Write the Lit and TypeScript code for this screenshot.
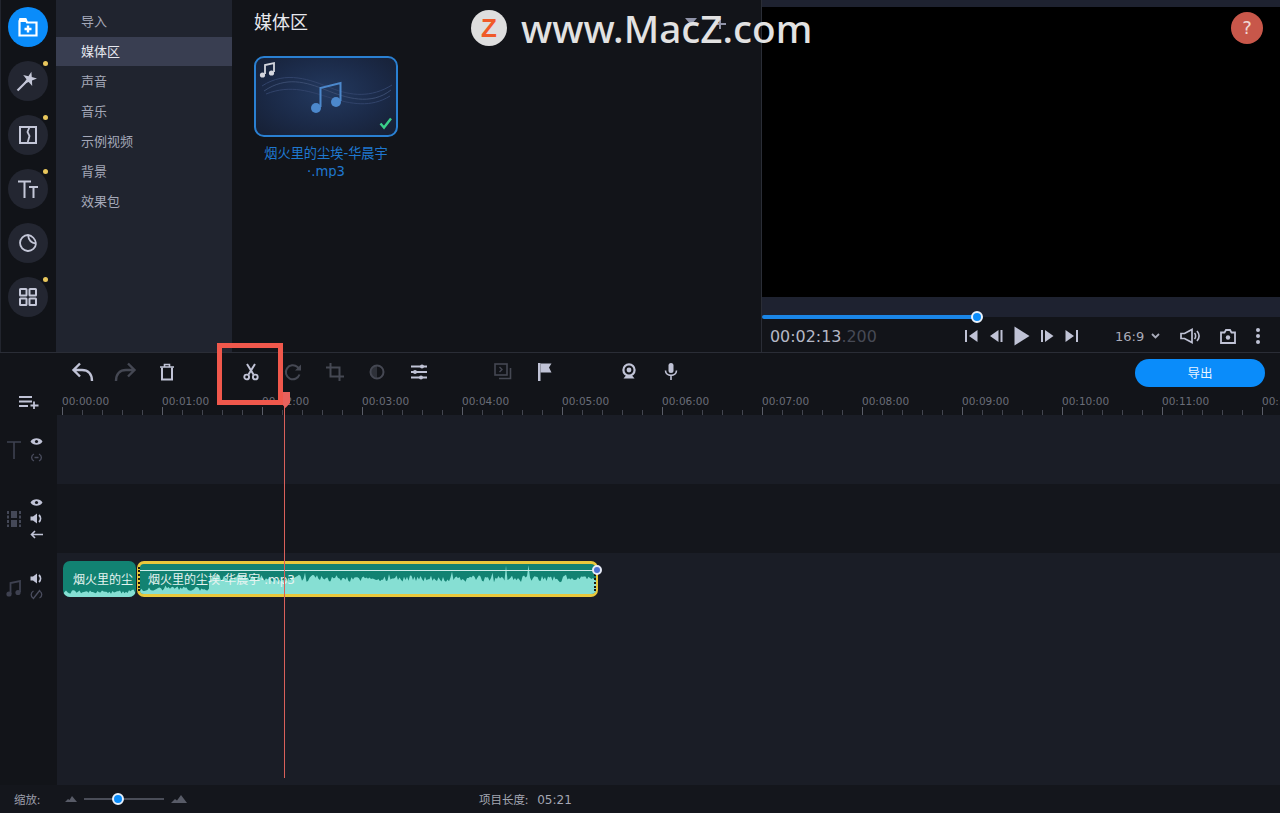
import { LitElement, html, css, svg } from "lit";
import { customElement } from "lit/decorators.js";

function rng(seed: number) {
  let s = seed;
  return () => {
    s = (s * 16807) % 2147483647;
    return s / 2147483647;
  };
}

function wavePath(width: number, height: number, seed: number, low: number, amp: number, spike = 0.04, spikeH = 2.2) {
  const r = rng(seed);
  let d = `M0 ${height}`;
  let prev = low + amp / 2;
  for (let x = 0; x <= width; x += 1.5) {
    let h = 0.3 * prev + 0.7 * (low + r() * amp);
    prev = h;
    if (r() < spike) h += r() * amp * spikeH;
    d += `L${x} ${(height - h).toFixed(1)}`;
  }
  return d + `L${width} ${height}Z`;
}

const ic = (w: number, h: number, body: unknown) =>
  html`<svg width=${w} height=${h} viewBox="0 0 ${w} ${h}" fill="none" stroke="currentColor" stroke-width="2">${body}</svg>`;

const cats = ["导入", "媒体区", "声音", "音乐", "示例视频", "背景", "效果包"];

const railIcons = [
  { active: true, dot: false, icon: ic(20, 20, svg`<path d="M1.5 4V18.5H18.5V5.5H9L7.5 2H2.5Z" stroke-width="2.2"/><path d="M1 1.5H8L9.5 5H1Z" fill="currentColor" stroke="none"/><path d="M10 8.5V15.5M6.5 12H13.5" stroke-width="2.4"/>`) },
  { dot: true, icon: ic(24, 22, svg`<path d="M1.5 20.5L11 11" stroke-width="2.2"/><path transform="translate(-1.5 1)" d="M16.9 .8L17.3 6.1 22.5 7.6 17.5 9.6 17.7 15 14.2 10.9 9.2 12.7 12 8.2 8.7 3.9 13.9 5.2Z" fill="currentColor" stroke="none"/>`) },
  { dot: true, icon: ic(20, 20, svg`<rect x="2" y="2" width="16" height="16" stroke-width="2"/><path d="M11.5 2L9.5 7 11.5 11 9.5 18" stroke-width="1.8"/>`) },
  { dot: true, icon: ic(22, 20, svg`<path d="M1 2.5H14M7.5 2.5V19" stroke-width="2"/><path d="M12 8H21M16.5 8V19" stroke-width="2"/>`) },
  { dot: false, icon: ic(20, 20, svg`<path d="M10 2A8 8 0 1 0 18 10.5" stroke-width="1.8"/><path d="M10 2C14 2.5 17.5 6 18 10.5" stroke-width="1.8"/><path d="M10 2C10.5 7 13 10 18 10.5" stroke-width="1.8"/>`) },
  { dot: true, icon: ic(20, 20, svg`<rect x="2" y="2" width="6.5" height="6.5" rx=".5"/><rect x="11.5" y="2" width="6.5" height="6.5" rx=".5"/><rect x="2" y="11.5" width="6.5" height="6.5" rx=".5"/><rect x="11.5" y="11.5" width="6.5" height="6.5" rx=".5"/>`) },
];

const eye = ic(13, 9, svg`<path d="M0.5 4.5C3 .2 10 .2 12.5 4.5 10 8.8 3 8.8 .5 4.5Z" fill="currentColor" stroke="none"/><circle cx="6.5" cy="4.5" r="1.6" fill="#14161c" stroke="none"/>`);
const speaker = ic(13, 11, svg`<path d="M0.5 3.5H3L7 .5V10.5L3 7.5H.5Z" fill="currentColor" stroke="none"/><path d="M9 2C11 4 11 7 9 9" stroke-width="1.8"/>`);
const link = ic(13, 9, svg`<path d="M4 1C.8 2.5 .8 6.5 4 8M9 1C12.2 2.5 12.2 6.5 9 8M4.5 4.5H8.5" stroke-width="1.3"/>`);
const unlink = ic(13, 11, svg`<path d="M3.5 2C.5 3.5 .5 7.5 3 9M9.5 2C12.5 3.5 12.5 7.5 9.5 9M3 10L10 1" stroke-width="1.3"/>`);
const arrow = ic(13, 9, svg`<path d="M13 4.5H2M5 1L1.5 4.5 5 8" stroke-width="1.6"/>`);
const mountSm = ic(12, 6, svg`<path d="M0 6L3 3 4.5 4 7 0 12 6Z" fill="currentColor" stroke="none"/>`);
const mountLg = ic(16, 8, svg`<path d="M0 8L4 4 6 5.5 10 0 16 8Z" fill="currentColor" stroke="none"/>`);

const tools: { gap?: number; dim?: boolean; icon: unknown }[] = [
  { icon: ic(24, 22, svg`<path d="M21 20C21 13 17 9 11 9H3M9 2.5L2.5 9 9 15.5" stroke-width="2.4"/>`) },
  { dim: true, icon: ic(24, 22, svg`<path d="M3 20C3 13 7 9 13 9H21M15 2.5L21.5 9 15 15.5" stroke-width="2.4"/>`) },
  { icon: ic(16, 18, svg`<path d="M1 4H15M5.5 3.5V1.5H10.5V3.5" stroke-width="1.6"/><path d="M3 4.5V16.5H13V4.5" stroke-width="2"/>`) },
  { gap: 42, icon: ic(16, 18, svg`<path d="M4 1L10.5 11.5M12 1L5.5 11.5" stroke-width="2"/><circle cx="3.7" cy="14" r="2.4" stroke-width="1.9"/><circle cx="12.3" cy="14" r="2.4" stroke-width="1.9"/>`) },
  { dim: true, icon: ic(20, 20, svg`<path d="M16.5 12.5A7 7 0 1 1 14.5 5L17 7.5" stroke-width="2"/><path d="M18 2.5V8.5H12" fill="currentColor" stroke="none"/>`) },
  { dim: true, icon: ic(18, 18, svg`<path d="M4.5 0V13.5H18M0 4.5H13.5V18" stroke-width="2"/>`) },
  { dim: true, icon: ic(16, 16, svg`<circle cx="8" cy="8" r="6.5" stroke-width="2"/><path d="M8 2A6 6 0 0 0 8 14Z" fill="currentColor" stroke="none" opacity=".55"/>`) },
  { icon: ic(18, 16, svg`<path d="M1 2.5H17M1 8H17M1 13.5H17" stroke-width="2"/><circle cx="12" cy="2.5" r="2" fill="currentColor" stroke="none"/><circle cx="5" cy="8" r="2" fill="currentColor" stroke="none"/><circle cx="11" cy="13.5" r="2" fill="currentColor" stroke="none"/>`) },
  { gap: 42, dim: true, icon: ic(18, 17, svg`<rect x="1" y="1" width="12" height="11" stroke-width="1.6"/><path d="M5.5 4L8 6.5 5.5 9" stroke-width="1.4"/><path d="M16.5 5V15.5H5" stroke-width="1.6"/>`) },
  { icon: ic(14, 18, svg`<path d="M0 0H2.5V18H0Z" fill="currentColor" stroke="none"/><path d="M2.5 0.5H13.5L11 4.5 13.5 9.5H2.5Z" fill="currentColor" stroke="none"/>`) },
  { gap: 42, icon: ic(16, 17, svg`<circle cx="8" cy="7" r="5.6" stroke-width="2.2"/><circle cx="8" cy="7" r="2.4" fill="currentColor" stroke="none"/><path d="M2.5 15.5H13.5L11.5 13H4.5Z" fill="currentColor" stroke="none"/>`) },
  { icon: ic(14, 17, svg`<rect x="4.5" y="0" width="5" height="10" rx="2.5" fill="currentColor" stroke="none"/><path d="M1.5 7.5C1.5 14 12.5 14 12.5 7.5M7 12V17" stroke-width="1.6"/>`) },
];

@customElement("app-root")
export class AppRoot extends LitElement {
  static styles = css`
    :host {
      display: block;
      position: relative;
      width: 1280px;
      height: 813px;
      overflow: hidden;
      background: #121419;
      color: #b9bccb;
      font-family: "DejaVu Sans", "Noto Sans CJK SC", sans-serif;
    }
    .cjk { font-family: "Noto Sans CJK SC", sans-serif; }
    .top { display: flex; height: 352px; border-bottom: 1px solid #2a2d36; }
    .rail {
      width: 55px; flex: none; border-left: 1px solid #22252e;
      background: #111318; padding-top: 7px; display: flex; flex-direction: column; gap: 14px;
    }
    .rbtn {
      position: relative; width: 40px; height: 40px; border-radius: 50%; margin-left: 7px;
      background: #232631; color: #c4c7d8; display: flex; align-items: center; justify-content: center;
    }
    .rbtn.active { background: #0a8cfa; color: #fff; }
    .dot { position: absolute; left: 35px; top: 0; width: 5px; height: 5px; border-radius: 50%; background: #e9c75c; }
    .cats { width: 176px; flex: none; background: #20242f; padding-top: 7px; font-size: 13px; color: #a4a8b8; font-family: "Noto Sans CJK SC", sans-serif; }
    .cat { height: 30px; line-height: 28px; padding-left: 25px; }
    .cat.sel { background: #393e51; color: #e6e8ef; height: 29px; margin-bottom: 1px; }
    .media { width: 529px; flex: none; box-sizing: border-box; padding: 9px 0 0 22px; background: #121419; }
    .media h2 { margin: 0; font: 400 18px/25px "Noto Sans CJK SC", sans-serif; color: #e8e9ee; }
    .card {
      position: relative; box-sizing: border-box; width: 144px; height: 81px; margin-top: 22px;
      border: 2px solid #2a80d2; border-radius: 10px; overflow: hidden;
      background: radial-gradient(ellipse at 50% 45%, #23395f 0%, #1b2a48 55%, #161f33 100%);
    }
    .card svg { position: absolute; left: 0; top: 0; }
    .label {
      width: 144px; margin-top: 8px; height: 33px; overflow: hidden; text-align: center;
      font: 13.2px/18px "DejaVu Sans", "Noto Sans CJK SC", sans-serif; color: #1f78d0;
    }
    .preview { flex: 1; border-left: 1px solid #2a2d36; display: flex; flex-direction: column; }
    .strip1 { height: 7px; background: #1e2230; }
    .screen { height: 290px; background: #000; }
    .strip2 { height: 20px; background: #1e2230; }
    .seek { position: relative; height: 0; }
    .seek .fill { position: absolute; left: 0; top: -2px; width: 216px; height: 4px; background: #1a86e8; border-radius: 2px; }
    .seek .thumb {
      position: absolute; left: 209px; top: -6px; width: 8px; height: 8px; border: 2px solid #e8f1fb;
      border-radius: 50%; background: #0a8cfa;
    }
    .ctrls { flex: 1; display: flex; align-items: center; padding: 3px 0 0 8px; color: #c0c3d6; }
    .time { width: 195px; font-size: 15.9px; color: #b5b8c6; }
    .time span { color: #474a55; }
    .player { display: flex; align-items: center; gap: 11px; width: 150px; }
    .ratio { font-size: 13px; color: #a9acba; width: 65px; display: flex; align-items: center; gap: 7px; }
    .ctrl2 { display: flex; align-items: center; gap: 20px; }
    .ctrl2 .ratio { margin-right: -20px; }
    .toolbar { box-sizing: border-box; height: 39px; display: flex; align-items: center; padding: 0 15px 2px 62px; }
    .tb { width: 42px; display: flex; justify-content: center; color: #c0c3d6; }
    .tb.dim { color: #454853; }
    .export {
      margin-left: auto; width: 130px; height: 28px; border-radius: 14px; background: #0a8cfa; color: #eaf4ff;
      text-align: center; font: 12.5px/27px "Noto Sans CJK SC", sans-serif; margin-top: 2px;
    }
    .rulerrow { display: flex; height: 23px; }
    .addtrack { width: 57px; flex: none; display: flex; align-items: center; padding-left: 19px; box-sizing: border-box; color: #c0c3d6; padding-bottom: 4px; }
    .ruler {
      flex: 1; display: flex; padding-left: 5px; overflow: hidden; white-space: nowrap;
      background:
        repeating-linear-gradient(90deg, #5a5d68 0 1px, transparent 1px 100px) 5px 100% / 100% 8px no-repeat,
        repeating-linear-gradient(90deg, #42454f 0 1px, transparent 1px 20px) 5px 100% / 100% 5px no-repeat;
    }
    .tick { flex: 0 0 100px; font-size: 10.5px; color: #6a6d78; line-height: 18px; }
    .track { display: flex; }
    .thead {
      width: 57px; flex: none; box-sizing: border-box; background: #121419; display: grid; grid-template-columns: 29px 14px;
      align-items: center;
    }
    .thead .big { display: flex; justify-content: center; width: 27px; }
    .thead .col { display: flex; flex-direction: column; align-items: center; gap: 7px; color: #c0c3d6; }
    .off { color: #3e4150; display: flex; }
    .thead .col .off { color: #4a4d5e; }
    .tbody { flex: 1; }
    .t1 { height: 69px; }
    .t1 .tbody { background: #1a1d26; }
    .t2 { height: 69px; }
    .t2 .tbody { background: #14161c; }
    .t2 .col { gap: 6px; }
    .t2 .big { color: #444857; }
    .t3 { height: 232px; }
    .t3 .thead { align-items: start; padding-top: 20px; }
    .t3 .col { gap: 5px; }
    .t3 .big { margin-top: 7px; }
    .t3 .tbody { background: #1a1d26; padding: 8px 0 0 6px; display: flex; gap: 1px; align-items: flex-start; }
    .clip {
      position: relative; height: 36px; background: #128272; box-sizing: border-box; overflow: hidden; flex: none;
      color: #e6f4f1; font: 12px/38px "DejaVu Sans", "Noto Sans CJK SC", sans-serif;
    }
    .clip svg { position: absolute; left: 0; bottom: 0; }
    .clip .txt { position: relative; }
    .c1 { width: 73px; border-radius: 7px; padding-left: 10px; }
    .c2 {
      width: 461px; border-radius: 7px; padding-left: 8px; border: solid #e9c83c; border-width: 3px 2px 3px 3px;
      line-height: 32px;
    }
    .c2wrap { position: relative; }
    .vline { position: absolute; left: 3px; right: 0; top: 9px; height: 1px; background: #cfeee9; }
    .node {
      position: absolute; left: 455px; top: 4px; width: 6px; height: 6px; border: 2px solid #e6eaf6; border-radius: 50%; background: #4a6fd0;
    }
    .handle { position: absolute; top: 6px; width: 0; height: 24px; border-left: 2px dotted #1b1b12; }
    .bottom {
      height: 28px; display: flex; align-items: center; background: #14161c; color: #9c9fac;
      font-size: 11.5px; padding-left: 14px; box-sizing: border-box;
    }
    .bottom .zl { width: 51px; font-family: "Noto Sans CJK SC", sans-serif; }
    .zoom { display: flex; align-items: center; color: #585b67; width: 414px; }
    .slider { position: relative; width: 80px; height: 2px; background: #4a4d58; margin: 0 7px; }
    .slider i {
      position: absolute; left: 28px; top: -5px; width: 8px; height: 8px; border-radius: 50%; background: #0a8cfa; border: 2px solid #e6effa;
    }
    .plen { color: #a4a7b3; }
    .plen .num { font-size: 12px; margin-left: 9px; }
    .head { position: absolute; left: 281px; top: 392px; }
    .line { position: absolute; left: 284px; top: 392px; width: 1px; height: 386px; background: #d8605a; }
    .redbox { position: absolute; left: 217px; top: 343px; width: 66px; height: 62px; box-sizing: border-box; border: 5px solid #f0584c; }
    .wm { position: absolute; left: 471px; top: 10px; display: flex; align-items: center; gap: 14px; }
    .logo { width: 36px; height: 36px; border-radius: 50%; background: #dedede; display: flex; align-items: center; justify-content: center; }
    .logo b { font: 800 26px/1 "Liberation Sans", sans-serif; color: #f05a28; }
    .wmt { font: 500 38.7px/36px "Noto Sans", sans-serif; color: #e2e2e2; }
    .ghost { position: absolute; left: 685px; top: 18px; color: #8f93a8; }
    .help {
      position: absolute; left: 1231px; top: 12px; width: 32px; height: 32px; border-radius: 50%; background: #c8574a; color: #f0d8d4;
      text-align: center; font: 18px/32px "DejaVu Sans", sans-serif;
    }
  `;

  render() {
    const wave1 = wavePath(73, 16, 71, 2, 6, 0.06, 1);
    const wave2a = wavePath(70, 18, 1237, 2, 6, 0.06, 1);
    const wave2b = wavePath(387, 30, 4242, 11, 9, 0.05, 1.2);
    return html`
      <div class="top">
        <div class="rail">
          ${railIcons.map(
            (r) => html`<div class="rbtn ${r.active ? "active" : ""}">${r.icon}${r.dot ? html`<span class="dot"></span>` : ""}</div>`
          )}
        </div>
        <div class="cats">
          ${cats.map((c, i) => html`<div class="cat ${i === 1 ? "sel" : ""}">${c}</div>`)}
        </div>
        <div class="media">
          <h2>媒体区</h2>
          <div class="card">
            <svg width="140" height="77" viewBox="0 0 140 77" fill="none">
              <path d="M8 33C30 18 50 24 70 32S115 48 135 32" stroke="#3a4c70" stroke-width="1"/>
              <path d="M6 28C30 12 55 22 75 30S115 40 136 27" stroke="#31436a" stroke-width="1"/>
              <path d="M10 36C35 26 55 34 75 40S115 50 134 38" stroke="#31436a" stroke-width="1"/>
              <path d="M64.5 49V30L84.5 25V43" stroke="#4c88cc" stroke-width="2"/>
              <circle cx="60" cy="50" r="5" fill="#4c88cc"/>
              <circle cx="80" cy="44" r="5" fill="#4c88cc"/>
              <path d="M9 16V7L18 5V14" stroke="#d4d6de" stroke-width="1.8"/>
              <circle cx="6.5" cy="17" r="2.6" fill="#d4d6de"/>
              <circle cx="15.5" cy="15" r="2.6" fill="#d4d6de"/>
              <path d="M124.5 65.5L128 69.5 135 60.5" stroke="#3ad08a" stroke-width="2.4"/>
            </svg>
          </div>
          <div class="label">烟火里的尘埃-华晨宇<br />·.mp3</div>
        </div>
        <div class="preview">
          <div class="strip1"></div>
          <div class="screen"></div>
          <div class="strip2"></div>
          <div class="seek"><div class="fill"></div><div class="thumb"></div></div>
          <div class="ctrls">
            <div class="time">00:02:13<span>.200</span></div>
            <div class="player">
              ${ic(13, 14, svg`<path d="M1 1V13" stroke-width="2"/><path d="M12.5 1V13L4 7Z" fill="currentColor" stroke="none"/>`)}
              ${ic(14, 14, svg`<path d="M12.5 1V13" stroke-width="2"/><path d="M9.5 1V13L1 7Z" fill="currentColor" stroke="none"/>`)}
              ${ic(16, 20, svg`<path d="M.5 .5L15.5 10 .5 19.5Z" fill="currentColor" stroke="none"/>`)}
              ${ic(13, 14, svg`<path d="M1 1V13" stroke-width="2"/><path d="M4 1V13L12.5 7Z" fill="currentColor" stroke="none"/>`)}
              ${ic(13, 14, svg`<path d="M12 1V13" stroke-width="2"/><path d="M.5 1V13L9 7Z" fill="currentColor" stroke="none"/>`)}
            </div>
            <div class="ctrl2">
              <div class="ratio">16:9 ${ic(9, 6, svg`<path d="M1 1L4.5 4.5 8 1" stroke-width="1.8"/>`)}</div>
              ${ic(20, 16, svg`<path d="M1 5.5H4.5L12 1.5V14.5L4.5 10.5H1Z" stroke-width="1.7"/><path d="M14.5 5C16 6.5 16 9.5 14.5 11M17 3C19.5 6 19.5 10 17 13" stroke-width="1.6"/>`)}
              ${ic(16, 15, svg`<path d="M1 3.5H4.5L6 1H10L11.5 3.5H15V14H1Z" stroke-width="1.8"/><circle cx="8" cy="8.5" r="2.2" fill="currentColor" stroke="none"/>`)}
              ${ic(4, 16, svg`<circle cx="2" cy="2" r="2" fill="currentColor" stroke="none"/><circle cx="2" cy="8" r="2" fill="currentColor" stroke="none"/><circle cx="2" cy="14" r="2" fill="currentColor" stroke="none"/>`)}
            </div>
          </div>
        </div>
      </div>

      <div class="toolbar">
        ${tools.map(
          (t) => html`<div class="tb ${t.dim ? "dim" : ""}" style=${t.gap ? `margin-left:${t.gap}px` : ""}>${t.icon}</div>`
        )}
        <div class="export">导出</div>
      </div>

      <div class="rulerrow">
        <div class="addtrack">
          ${ic(20, 14, svg`<path d="M0 2H13M0 6.5H13M0 11H9" stroke-width="1.8"/><path d="M15 6.5V14M11.5 10.5H19.5" stroke-width="1.8"/>`)}
        </div>
        <div class="ruler">
          ${Array.from({ length: 13 }, (_, i) => html`<span class="tick">00:${String(i).padStart(2, "0")}:00</span>`)}
        </div>
      </div>

      <div class="track t1">
        <div class="thead">
          <div class="big off">${ic(14, 18, svg`<path d="M0 1H14M7 1V18" stroke-width="1.6"/>`)}</div>
          <div class="col">${eye}<span class="off">${link}</span></div>
        </div>
        <div class="tbody"></div>
      </div>
      <div class="track t2">
        <div class="thead">
          <div class="big">
            ${ic(14, 16, svg`<rect x="4" y="0" width="6" height="7" fill="currentColor" stroke="none"/><rect x="4" y="9" width="6" height="7" fill="currentColor" stroke="none"/><path d="M1 0V16M13 0V16" stroke-width="2" stroke-dasharray="3 1.5"/>`)}
          </div>
          <div class="col">${eye}${speaker}${arrow}</div>
        </div>
        <div class="tbody"></div>
      </div>
      <div class="track t3">
        <div class="thead">
          <div class="big off">
            ${ic(15, 17, svg`<path d="M4.5 14V3L14 1V12" stroke-width="1.8"/><circle cx="3" cy="14" r="2.6" fill="currentColor" stroke="none"/><circle cx="12" cy="12.5" r="2.6" fill="currentColor" stroke="none"/>`)}
          </div>
          <div class="col">${speaker}<span class="off">${unlink}</span></div>
        </div>
        <div class="tbody">
          <div class="clip c1">
            <svg width="73" height="16" viewBox="0 0 73 16"><path d=${wave1} fill="#86dfd3"/></svg>
            <span class="txt">烟火里的尘</span>
          </div>
          <div class="c2wrap">
            <div class="clip c2">
              <svg width="456" height="30" viewBox="0 0 456 30">
                <path d=${wave2a} transform="translate(0 12)" fill="#86dfd3"/>
                <path d=${wave2b} transform="translate(69 0)" fill="#86dfd3"/>
              </svg>
              <span class="txt">烟火里的尘埃-华晨宇·.mp3</span>
            </div>
            <div class="vline"></div>
            <div class="handle" style="left:1px"></div>
            <div class="handle" style="left:457px"></div>
            <div class="node"></div>
          </div>
        </div>
      </div>

      <div class="bottom">
        <div class="zl">缩放:</div>
        <div class="zoom">
          ${mountSm}
          <div class="slider"><i></i></div>
          ${mountLg}
        </div>
        <div class="plen"><span class="cjk">项目长度:</span><span class="num">05:21</span></div>
      </div>

      <div class="line"></div>
      <svg class="head" width="9" height="16" viewBox="0 0 9 16"><path d="M0 0H9V11L4.5 16 0 11Z" fill="#e8615c"/></svg>
      <div class="redbox"></div>
      <svg class="ghost" width="42" height="11" viewBox="0 0 42 11" fill="currentColor">
        <path d="M0 0H12L6 7Z"/>
        <path d="M34 1H36V11H34ZM30 5H41V7H30Z"/>
      </svg>
      <div class="wm"><div class="logo"><b>Z</b></div><div class="wmt">www.MacZ.com</div></div>
      <div class="help">?</div>
    `;
  }
}
